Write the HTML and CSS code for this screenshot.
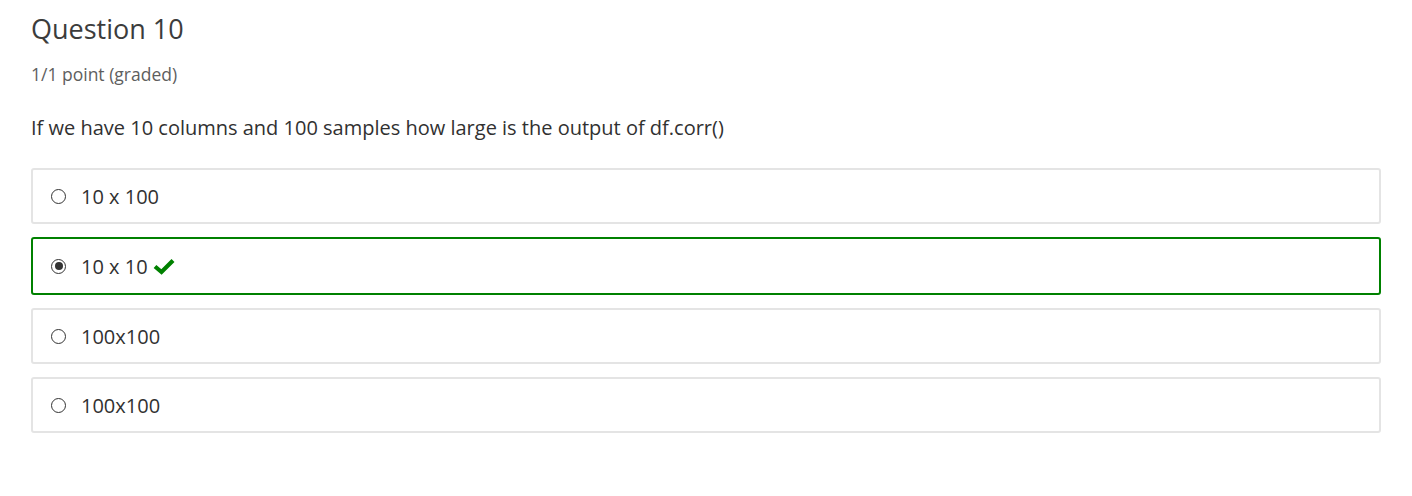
FILE: index.html
```html
<!DOCTYPE html>
<html>
<head>
<meta charset="utf-8">
<link rel="stylesheet" href="styles.css">
</head>
<body>
<div class="problem">
  <h3 class="title">Question 10</h3>
  <div class="points">1/1 point (graded)</div>
  <p class="prompt">If we have 10 columns and 100 samples how large is the output of df.corr()</p>
  <div class="choices">
    <label class="choice"><span class="radio"></span><span class="label">10 x 100</span></label>
    <label class="choice correct"><span class="radio checked"></span><span class="label">10 x 10</span>
      <svg class="check" width="22" height="17" viewBox="0 0 22 17"><path d="M2 8.5 L8.5 14 L20 2.5" fill="none" stroke="#008100" stroke-width="4.2" stroke-linecap="butt" stroke-linejoin="miter"/></svg>
    </label>
    <label class="choice"><span class="radio"></span><span class="label">100x100</span></label>
    <label class="choice"><span class="radio"></span><span class="label">100x100</span></label>
  </div>
</div>
</body>
</html>
```
FILE: styles.css
```css
html, body {
  margin: 0;
  padding: 0;
  background: #fff;
}
body {
  font-family: "Open Sans", "Liberation Sans", sans-serif;
  color: #313131;
}
.problem {
  padding: 9px 31px 0 31px;
}
.title {
  margin: 0;
  font-size: 27px;
  font-weight: 400;
  line-height: 40px;
  color: #3c3c3c;
}
.points {
  margin-top: 13px;
  font-size: 17.5px;
  line-height: 24px;
  color: #5e5e5e;
}
.prompt {
  margin: 28px 0 0 0;
  font-size: 20px;
  line-height: 28px;
  color: #313131;
}
.choices {
  margin-top: 26px;
  display: flex;
  flex-direction: column;
  gap: 13px;
}
.choice {
  display: flex;
  align-items: center;
  height: 56px;
  box-sizing: border-box;
  border: 2px solid #e4e4e4;
  border-radius: 3px;
  padding: 0 0 0 18px;
  font-size: 20px;
  color: #313131;
}
.choice.correct {
  border-color: #008100;
  height: 58px;
}
.choice.last {
  height: 55px;
}
.radio {
  width: 15px;
  height: 15px;
  border: 1px solid #333;
  border-radius: 50%;
  box-sizing: border-box;
  margin-right: 15px;
  position: relative;
  flex: none;
}
.radio.checked::after {
  content: "";
  position: absolute;
  left: 2.5px;
  top: 2.5px;
  width: 8px;
  height: 8px;
  border-radius: 50%;
  background: #333;
}
.check {
  margin-left: 5px;
}
```
